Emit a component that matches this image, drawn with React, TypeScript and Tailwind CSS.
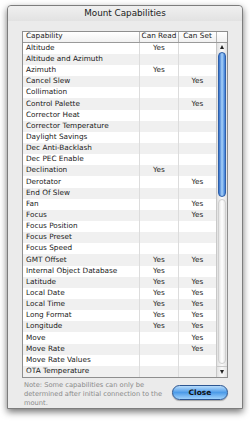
const ROWS: [string, boolean, boolean][] = [
  ['Altitude', true, false],
  ['Altitude and Azimuth', false, false],
  ['Azimuth', true, false],
  ['Cancel Slew', false, true],
  ['Collimation', false, false],
  ['Control Palette', false, true],
  ['Corrector Heat', false, false],
  ['Corrector Temperature', false, false],
  ['Daylight Savings', false, false],
  ['Dec Anti-Backlash', false, false],
  ['Dec PEC Enable', false, false],
  ['Declination', true, false],
  ['Derotator', false, true],
  ['End Of Slew', false, false],
  ['Fan', false, true],
  ['Focus', false, true],
  ['Focus Position', false, false],
  ['Focus Preset', false, false],
  ['Focus Speed', false, false],
  ['GMT Offset', true, true],
  ['Internal Object Database', true, false],
  ['Latitude', true, true],
  ['Local Date', true, true],
  ['Local Time', true, true],
  ['Long Format', true, true],
  ['Longitude', true, true],
  ['Move', false, true],
  ['Move Rate', false, true],
  ['Move Rate Values', false, false],
  ['OTA Temperature', false, false],
]

const FONT = "font-['Lucida_Grande','DejaVu_Sans',sans-serif]"

function Scrollbar() {
  return (
    <div className="w-[11px] flex flex-col border-l border-[#c8c8c8] bg-gradient-to-r from-[#e2e2e2] via-[#fafafa] to-[#e2e2e2]">
      <div className="h-[9px] flex items-center justify-center">
        <span className="block w-0 h-0 border-l-[2.5px] border-r-[2.5px] border-b-[4px] border-l-transparent border-r-transparent border-b-[#222]" />
      </div>
      <div className="mx-[1px] h-[145px] rounded-full border border-[#2d5fa8] bg-gradient-to-r from-[#2f6ccb] via-[#a8d2f8] to-[#3a7ad4]" />
      <div className="flex-1 mx-[1px] mt-[2px] mb-[2px] rounded-full border border-[#cfcfcf] bg-gradient-to-r from-[#e6e6e6] via-[#ffffff] to-[#e6e6e6]" />
      <div className="h-[11px] flex items-center justify-center border-t border-[#c8c8c8]">
        <span className="block w-0 h-0 border-l-[2.5px] border-r-[2.5px] border-t-[4px] border-l-transparent border-r-transparent border-t-[#222]" />
      </div>
    </div>
  )
}

export default function App() {
  return (
    <div className={`w-[250px] h-[424px] bg-white pt-[5px] px-[7px] ${FONT}`}>
      <div className="w-[236px] h-[404px] flex flex-col rounded-t-[4px] border border-[#7d7d7d] bg-[#ebebeb] shadow-[0_3px_7px_rgba(0,0,0,0.55)]">
        <div className="h-[16px] flex items-center justify-center bg-gradient-to-b from-[#f0f0f0] to-[#e2e2e2] rounded-t-[4px] text-[8.8px] text-[#1a1a1a]">
          Mount Capabilities
        </div>
        <div className="flex-1 flex flex-col pt-[10px] pl-[14px] pr-[14px]">
          <div className="w-[206px] flex flex-col border border-[#8e8e8e] bg-white text-[7.3px] text-[#1a1a1a]">
            <div className="h-[11px] flex items-stretch border-b border-[#9a9a9a] bg-gradient-to-b from-[#ffffff] to-[#f1f1f1]">
              <div className="w-[116px] flex items-center pl-[3px]">Capability</div>
              <div className="w-[39px] flex items-center justify-center border-l border-[#b5b5b5]">Can Read</div>
              <div className="w-[38px] flex items-center justify-center border-l border-[#b5b5b5]">Can Set</div>
              <div className="flex-1 border-l border-[#b5b5b5]" />
            </div>
            <div className="flex">
              <div className="flex-1 flex flex-col">
                {ROWS.map(([name, read, set], i) => (
                  <div
                    key={name}
                    className={`h-[11.15px] flex items-stretch ${i % 2 === 1 ? 'bg-[#f0f0f0]' : 'bg-white'}`}
                  >
                    <div className="w-[116px] flex items-center pl-[3px] whitespace-nowrap">{name}</div>
                    <div className="w-[39px] flex items-center justify-center border-l border-[#dcdcdc]">{read ? 'Yes' : ''}</div>
                    <div className="flex-1 flex items-center justify-center border-l border-[#dcdcdc]">{set ? 'Yes' : ''}</div>
                  </div>
                ))}
              </div>
              <Scrollbar />
            </div>
          </div>
          <div className="flex items-start justify-between mt-[3px]">
            <p className="w-[146px] pl-[2px] text-[6.7px] leading-[9px] text-[#8a8a8a]">
              Note: Some capabilities can only be determined after initial connection to the mount.
            </p>
            <button className="mt-[4px] w-[56px] h-[15px] rounded-full border border-[#2c5590] bg-gradient-to-b from-[#b7dcfb] via-[#4c9be8] to-[#9fd2fb] text-[7.5px] font-bold text-[#111] shadow-[0_1px_1px_rgba(0,0,0,0.3)]">
              Close
            </button>
          </div>
        </div>
      </div>
    </div>
  )
}
